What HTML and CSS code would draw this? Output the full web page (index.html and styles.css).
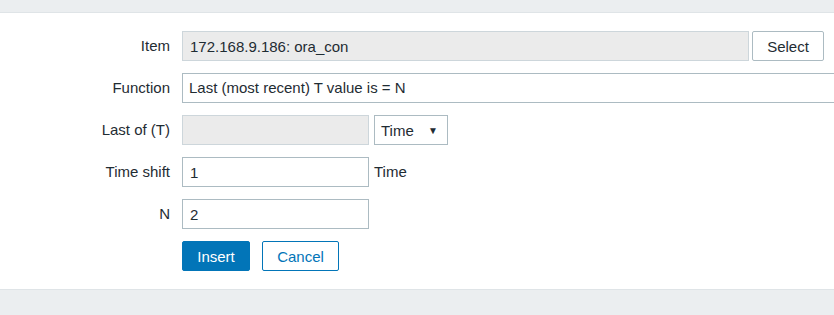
FILE: index.html
```html
<!DOCTYPE html>
<html lang="en">
<head>
    <meta charset="UTF-8">
    <title>Trigger expression</title>
    <link rel="stylesheet" href="styles.css">
</head>
<body>
    <div class="top-bar"></div>

    <form class="expr-form">
        <label class="form-label" for="item">Item</label>
        <div class="form-field">
            <input type="text" id="item" class="input input-item" value="172.168.9.186: ora_con" readonly>
            <button type="button" class="btn btn-alt">Select</button>
        </div>

        <label class="form-label" for="function">Function</label>
        <div class="form-field">
            <div class="input input-function" id="function">Last (most recent) T value is = N</div>
        </div>

        <label class="form-label" for="lastof">Last of (T)</label>
        <div class="form-field">
            <input type="text" id="lastof" class="input input-short" readonly>
            <div class="dropdown">
                <span>Time</span>
                <span class="arrow">&#9660;</span>
            </div>
        </div>

        <label class="form-label" for="timeshift">Time shift</label>
        <div class="form-field">
            <input type="text" id="timeshift" class="input input-short input-white" value="1">
            <span class="unit">Time</span>
        </div>

        <label class="form-label" for="n">N</label>
        <div class="form-field">
            <input type="text" id="n" class="input input-short input-white" value="2">
        </div>

        <div></div>
        <div class="form-field buttons">
            <button type="submit" class="btn btn-primary">Insert</button>
            <button type="button" class="btn btn-outline">Cancel</button>
        </div>
    </form>

    <div class="bottom-bar"></div>
</body>
</html>
```

FILE: styles.css
```css
body {
    margin: 0;
    font-family: "Liberation Sans", Arial, sans-serif;
    font-size: 15px;
    color: #1f2c33;
    background-color: #fff;
    overflow: hidden;
}

.top-bar {
    height: 12px;
    background-color: #ebeef0;
    border-bottom: 1px solid #dfe4e7;
}

.bottom-bar {
    height: 40px;
    background-color: #ebeef0;
    border-top: 1px solid #dfe4e7;
}

.expr-form {
    display: grid;
    grid-template-columns: 170px 1fr;
    column-gap: 12px;
    row-gap: 12px;
    padding: 18px 0;
}

.form-label {
    text-align: right;
    line-height: 30px;
    height: 30px;
}

.form-field {
    display: flex;
    align-items: center;
    gap: 5px;
    height: 30px;
    min-width: 0;
}

.input {
    box-sizing: border-box;
    height: 30px;
    border: 1px solid #acbbc2;
    background-color: #ebebeb;
    color: #1f2c33;
    font-family: inherit;
    font-size: 15px;
    padding: 0 7px;
    margin: 0;
    outline: none;
    line-height: 28px;
}

.input-item {
    width: 567px;
    border-color: #cdd6db;
}

.input-function {
    width: 680px;
    flex-shrink: 0;
    background-color: #fff;
    padding-left: 6px;
}

.input-short {
    width: 187px;
    border-color: #cdd6db;
}

.input-white {
    background-color: #fff;
    border-color: #acbbc2;
}

.dropdown {
    box-sizing: border-box;
    width: 74px;
    height: 30px;
    border: 1px solid #acbbc2;
    display: flex;
    align-items: center;
    justify-content: space-between;
    padding: 0 9px 0 6px;
}

.dropdown .arrow {
    font-size: 10px;
}

.unit {
    line-height: 30px;
}

.btn {
    box-sizing: border-box;
    height: 30px;
    font-family: inherit;
    font-size: 15px;
    border-radius: 2px;
    cursor: pointer;
    padding: 0;
    margin: 0;
}

.btn-alt {
    width: 72px;
    margin-left: -2px;
    background-color: #fff;
    border: 1px solid #acbbc2;
    color: #1f2c33;
}

.btn-primary {
    width: 68px;
    background-color: #0275b8;
    border: 1px solid #0275b8;
    color: #fff;
}

.btn-outline {
    width: 77px;
    margin-left: 7px;
    background-color: #fff;
    border: 1px solid #0275b8;
    color: #0275b8;
}
```
